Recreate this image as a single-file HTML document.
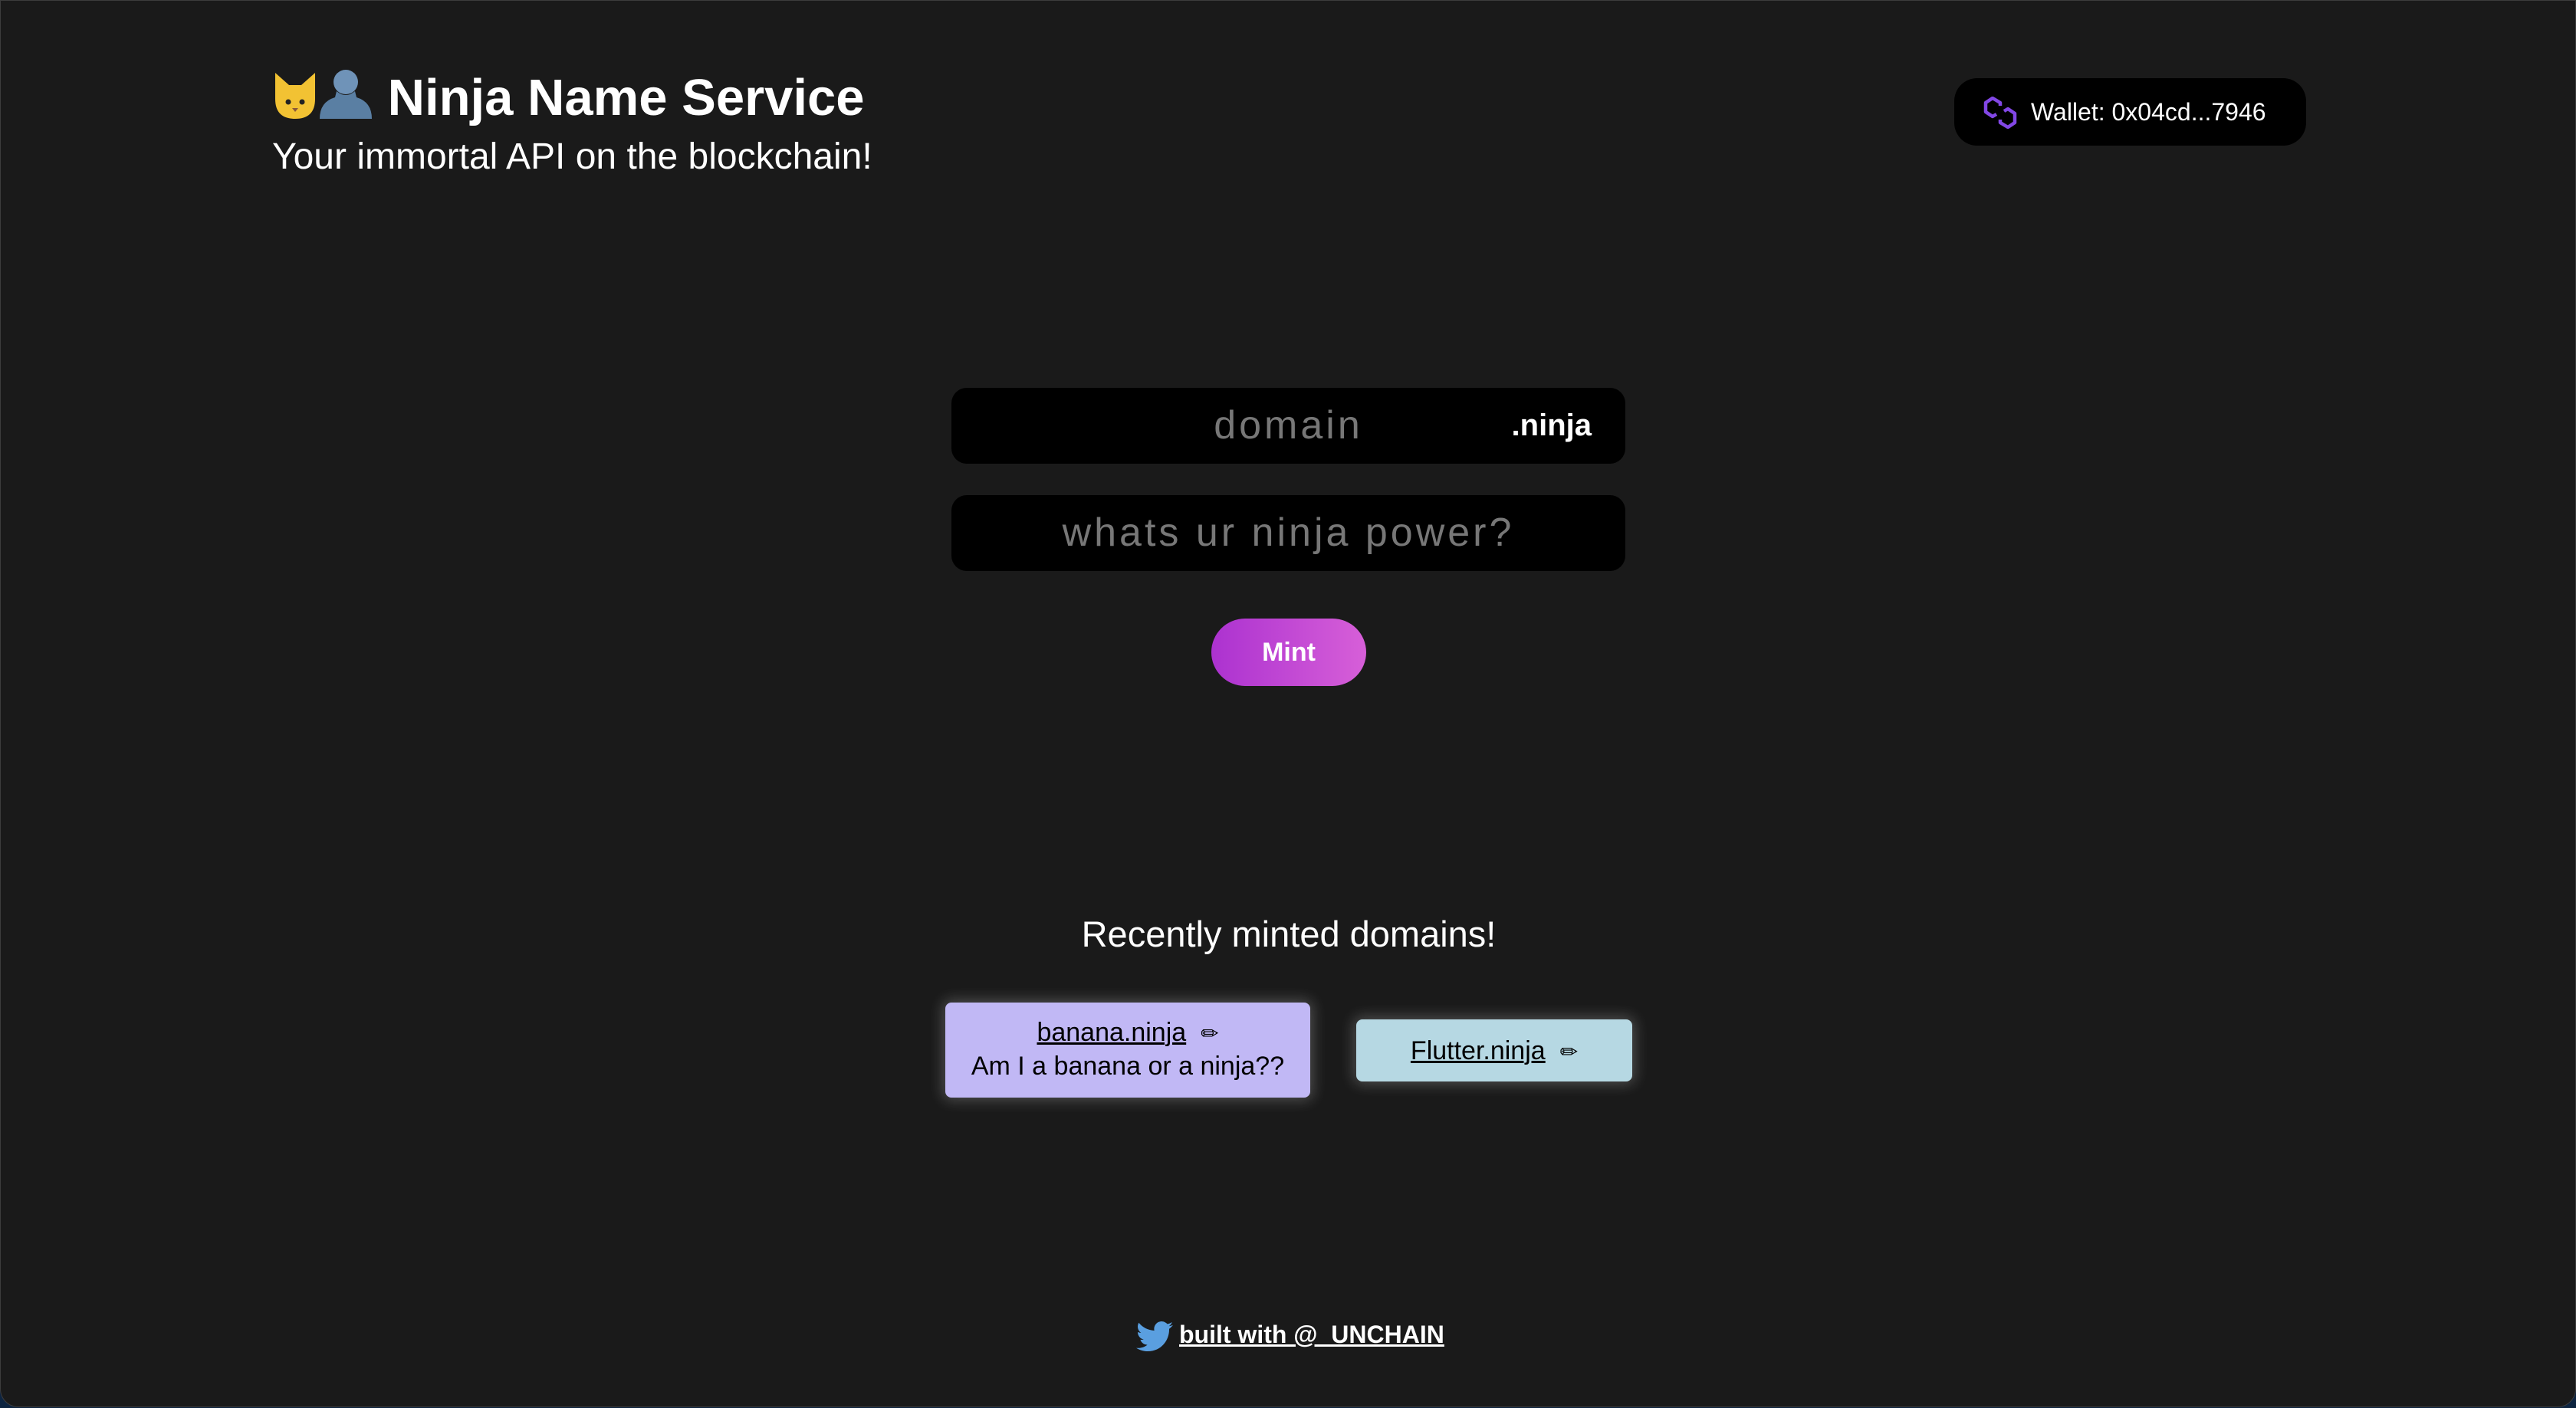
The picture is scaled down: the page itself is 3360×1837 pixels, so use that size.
<!DOCTYPE html>
<html><head><meta charset="utf-8"><style>
html,body{margin:0;padding:0;width:3360px;height:1837px;overflow:hidden;background:#0d2440;}
.frame{position:absolute;left:0;top:0;width:3358px;height:1834px;background:#1a1a1a;border:1px solid #3c3c3c;border-radius:0 0 24px 24px;font-family:"Liberation Sans","Noto Sans CJK JP",sans-serif;color:#fff;}
.abs{position:absolute;}
.title{left:354px;top:82px;font-size:67px;font-weight:bold;white-space:nowrap;line-height:90px;}
.emo{display:inline-block;vertical-align:middle;}
.sub{left:354px;top:172px;font-size:48px;line-height:64px;white-space:nowrap;}
.wallet{left:2548px;top:101px;width:459px;height:88px;background:#000;border-radius:30px;}
.wallet span{position:absolute;left:100px;top:24px;font-size:32px;line-height:40px;}
.inp{left:1240px;width:879px;height:99px;background:#000;border-radius:20px;color:#777;font-size:52px;letter-spacing:4px;text-align:center;line-height:99px;}
.mint{left:1579px;top:806px;width:202px;height:88px;border-radius:44px;background:linear-gradient(90deg,#ac32d0,#d75fd8);font-size:34px;font-weight:bold;text-align:center;line-height:88px;}
.rec{left:0;width:3360px;top:1186px;font-size:47px;text-align:center;line-height:64px;}
.card{border-radius:8px;color:#000;text-align:center;font-size:34px;line-height:43px;box-shadow:0 0 18px 4px rgba(255,255,255,0.22);}
.card u{text-decoration-thickness:3px;}
.pen{font-family:"DejaVu Sans",sans-serif;font-size:28px;}
.foot{left:1481px;top:1712px;font-size:32px;font-weight:bold;line-height:56px;white-space:nowrap;}
</style></head><body><div class="frame">
<div class="abs title"><span class="emo"><svg width="60" height="68" viewBox="0 0 60 68"><path d="M4 6 L22 22 L38 22 L56 6 L56 40 Q56 66 30 66 Q4 66 4 40Z" fill="#f2c233"/><circle cx="21" cy="44" r="3.5" fill="#222"/><circle cx="39" cy="44" r="3.5" fill="#222"/><path d="M26 52 L34 52 L30 57Z" fill="#8a5a3a"/></svg><svg width="72" height="72" viewBox="0 0 72 72"><circle cx="36" cy="22" r="16" fill="#6f93b8"/><path d="M24 34 Q36 44 48 34 L50 42 Q70 48 70 70 L2 70 Q2 48 22 42Z" fill="#5a7fa3"/></svg></span> Ninja Name Service</div>
<div class="abs sub">Your immortal API on the blockchain!</div>
<div class="abs wallet"><svg class="abs" style="left:38px;top:24px" width="44" height="42" viewBox="0 0 44 42"><g fill="none" stroke="#8247e5" stroke-width="4.5" stroke-linejoin="round"><path d="M22 12 L22 8 L12 2 L3 8 L3 20 L12 26 L17 23"/><path d="M22 30 L22 34 L32 40 L41 34 L41 22 L32 16 L27 19"/></g></svg><span>Wallet: 0x04cd...7946</span></div>
<div class="abs inp" style="top:505px"><span style="position:relative;left:0px">domain</span><span style="position:absolute;right:44px;top:0;color:#fff;font-weight:bold;font-size:40px;letter-spacing:0">.ninja</span></div>
<div class="abs inp" style="top:645px">whats ur ninja power?</div>
<div class="abs mint">Mint</div>
<div class="abs rec">Recently minted domains!</div>
<div class="abs card" style="left:1232px;top:1307px;width:476px;height:124px;background:#c1b8f5;"><div style="padding-top:18px"><u>banana.ninja</u> &nbsp;<span class="pen">✏</span><br>Am I a banana or a ninja??</div></div>
<div class="abs card" style="left:1768px;top:1329px;width:360px;height:81px;background:#b6d8e3;"><div style="padding-top:20px"><u>Flutter.ninja</u> &nbsp;<span class="pen">✏</span></div></div>
<div class="abs foot"><svg style="vertical-align:middle;margin-right:8px" width="48" height="40" viewBox="0 0 24 20"><path fill="#5a9fe0" d="M24 2.4c-.9.4-1.8.6-2.8.8 1-.6 1.8-1.6 2.2-2.7-1 .6-2 1-3.1 1.200C19.3.7 18 0 16.600 0c-2.700 0-4.900 2.200-4.900 4.900 0 .4 0 .8.1 1.100C7.700 5.800 4.100 3.900 1.700.9c-.4.7-.7 1.600-.7 2.500 0 1.700.9 3.200 2.200 4.100-.8 0-1.600-.2-2.200-.6v.1c0 2.400 1.700 4.400 3.900 4.800-.4.1-.8.2-1.300.2-.3 0-.6 0-.9-.1.6 2 2.400 3.400 4.600 3.400-1.700 1.300-3.800 2.100-6.100 2.100-.4 0-.8 0-1.200-.1 2.200 1.400 4.800 2.200 7.500 2.200 9.100 0 14-7.500 14-14v-.6c1-.7 1.800-1.600 2.500-2.500z"/></svg><u>built with @_UNCHAIN</u></div>
</div></body></html>
